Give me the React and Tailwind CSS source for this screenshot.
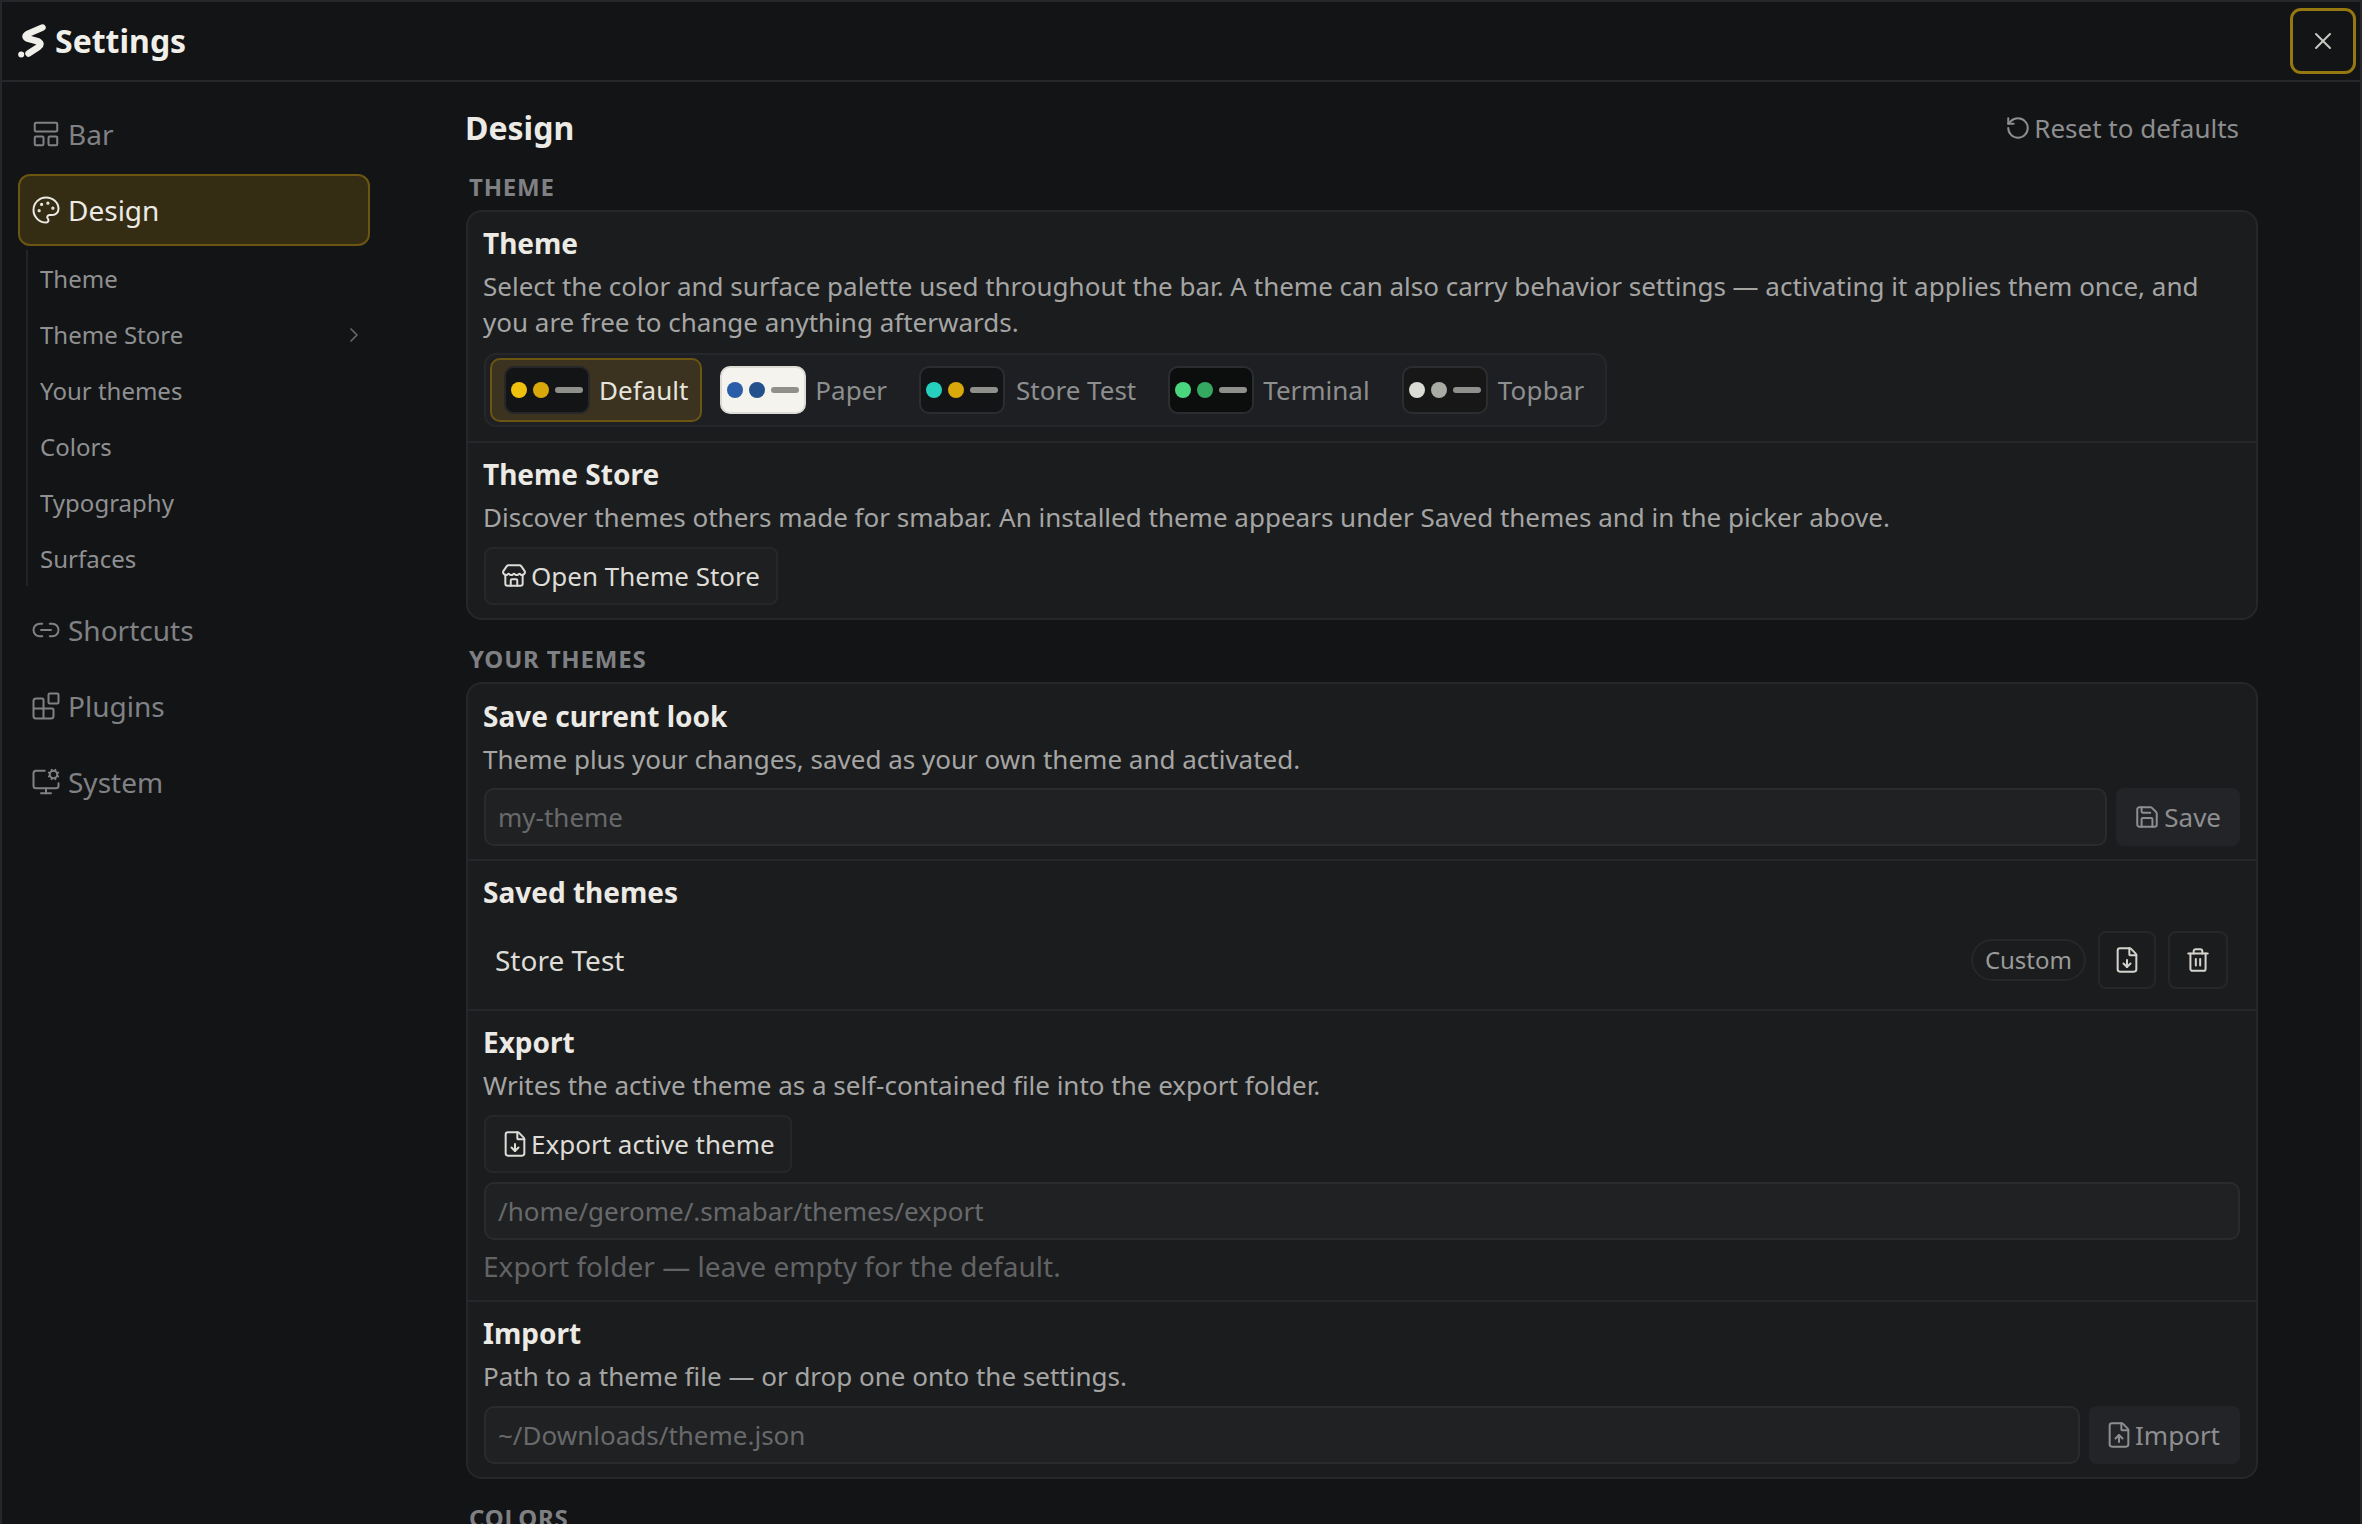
import { Blocks, ChevronRight, FileDown, FileUp, LayoutPanelTop, Link2, MonitorCog, Palette, RotateCcw, Save, Store, Trash2, X } from "lucide-react";

const Logo = () => (
  <svg viewBox="0 0 28 34" className="w-[28px] h-[34px] shrink-0" fill="none" stroke="#f1efea" strokeLinecap="round" strokeLinejoin="round">
    <path d="M24.5 3.5 L9.5 10 Q5.5 12.5 9.5 14.5 L20.5 17.5 Q24.5 20 20.5 23 L10.5 29.5" strokeWidth="6.5" />
    <circle cx="3.2" cy="30.5" r="3" fill="#f1efea" stroke="none" />
  </svg>
);

const NavItem = ({ icon: Icon, label, active }) => (
  <div className={`h-[72px] flex items-center pl-[11px] gap-[7px] rounded-[12px] border-2 text-[28px] ${active ? "bg-[#352c14] border-[#6b5511] text-[#eceae5]" : "border-transparent text-[#808184]"}`}>
    <Icon size={30} strokeWidth={1.6} className="shrink-0" />
    <span>{label}</span>
  </div>
);

const SubItem = ({ label, chevron }) => (
  <div className="h-[56px] pt-[2px] flex items-center justify-between pl-[12px] pr-[4px] text-[24px] text-[#8f9092]">
    <span>{label}</span>
    {chevron && <ChevronRight size={24} strokeWidth={1.7} className="text-[#66676a]" />}
  </div>
);

const Sidebar = () => (
  <aside className="w-[388px] shrink-0 pl-[16px] pr-[20px] pt-[16px] flex flex-col gap-[4px]">
    <NavItem icon={LayoutPanelTop} label="Bar" />
    <NavItem icon={Palette} label="Design" active />
    <div className="ml-[8px] mb-[4px] border-l-2 border-[#232427]">
      <SubItem label="Theme" />
      <SubItem label="Theme Store" chevron />
      <SubItem label="Your themes" />
      <SubItem label="Colors" />
      <SubItem label="Typography" />
      <SubItem label="Surfaces" />
    </div>
    <NavItem icon={Link2} label="Shortcuts" />
    <NavItem icon={Blocks} label="Plugins" />
    <NavItem icon={MonitorCog} label="System" />
  </aside>
);

const SectionLabel = ({ children, className }) => (
  <div className={`h-[36px] pl-[3px] flex items-center text-[24px] font-bold tracking-[0.8px] text-[#7f8083] ${className}`}>{children}</div>
);

const Row = ({ title, desc, children, className = "" }) => (
  <div className={`px-[16px] border-b-2 border-[#26272a] last:border-b-0 ${className}`}>
    <div className="-ml-[1px] h-[36px] flex items-center text-[28px] font-bold text-[#eceae5]">{title}</div>
    {desc && <p className="-ml-[1px] mt-[7px] text-[26px] leading-[36px] text-[#a5a5a4]">{desc}</p>}
    {children}
  </div>
);

const OutlineButton = ({ icon: Icon, size, className, children }) => (
  <button className={`h-[58px] pl-[15px] flex items-center rounded-[8px] border-2 border-[#26272a] bg-[#1e1f21] text-[26px] text-[#dedcd7] ${className}`}>
    <Icon size={size} strokeWidth={48 / size} />
    {children}
  </button>
);

const MutedButton = ({ icon: Icon, size, className, children }) => (
  <button className={`h-[58px] shrink-0 flex items-center rounded-[8px] bg-[#232427] text-[26px] text-[#8d8e8f] ${className}`}>
    <Icon size={size} strokeWidth={48 / size} />
    {children}
  </button>
);

const Field = ({ value, className = "" }) => (
  <div className={`h-[58px] px-[12px] flex items-center rounded-[10px] border-2 border-[#2a2b2e] bg-[#202123] text-[26px] text-[#68696b] ${className}`}>{value}</div>
);

const ThemeOption = ({ name, box, dots, active, labelClass = "" }) => (
  <div className={`h-[64px] px-[12px] flex items-center gap-[9px] rounded-[10px] border-2 ${active ? "bg-[#3b3220] border-[#6b5511] text-[#e6e4de]" : "border-transparent text-[#8d8e8f]"}`}>
    <div className={`w-[86px] h-[48px] pl-[5px] flex items-center gap-[6px] rounded-[10px] border-2 ${box}`}>
      <span className="w-[16px] h-[16px] rounded-full" style={{ background: dots[0] }} />
      <span className="w-[16px] h-[16px] rounded-full" style={{ background: dots[1] }} />
      <span className="w-[28px] h-[6px] rounded-full bg-[#8f8f8c]" />
    </div>
    <span className={`text-[26px] ${labelClass}`}>{name}</span>
  </div>
);

const SquareButton = ({ icon: Icon, size, className = "" }) => (
  <button className={`h-[58px] flex items-center justify-center rounded-[8px] border-2 border-[#26272a] text-[#d5d3ce] ${className}`}>
    <Icon size={size} strokeWidth={48 / size} />
  </button>
);

export default function App() {
  return (
    <div className="w-[2362px] h-[1524px] overflow-hidden flex flex-col bg-[#131416] border-2 border-b-0 border-[#26272a] font-['Noto_Sans',sans-serif]">
      <header className="h-[80px] shrink-0 pl-[16px] pr-[4px] flex items-center justify-between border-b-2 border-[#26272a]">
        <div className="flex items-center gap-[9px]">
          <Logo />
          <h1 className="text-[32px] font-bold text-[#f1efea]">Settings</h1>
        </div>
        <button className="w-[66px] h-[66px] flex items-center justify-center rounded-[11px] border-[3px] border-[#967810] text-[#c8c6c1]">
          <X size={28} strokeWidth={1.7} />
        </button>
      </header>

      <div className="flex-1 flex min-h-0">
        <Sidebar />
        <main className="flex-1 min-w-0 pl-[76px] pr-[102px] pt-[22px] overflow-hidden">
          <div className="h-[48px] flex items-center justify-between pr-[19px]">
            <h2 className="-ml-[1px] text-[32px] font-bold text-[#eceae5]">Design</h2>
            <button className="flex items-center gap-[3px] text-[26px] text-[#8d8e8f]">
              <RotateCcw size={26} strokeWidth={1.85} />
              Reset to defaults
            </button>
          </div>

          <SectionLabel className="mt-[17px] mb-[5px]">THEME</SectionLabel>
          <section className="rounded-[16px] border-2 border-[#26272a] bg-[#1b1c1e]">
            <Row className="pt-[13px] pb-[13px]" title="Theme" desc="Select the color and surface palette used throughout the bar. A theme can also carry behavior settings — activating it applies them once, and you are free to change anything afterwards.">
              <div className="mt-[13px] mb-[1px] w-fit h-[74px] pl-[4px] pr-[6px] flex items-center gap-[4px] rounded-[12px] border-2 border-[#26272a] bg-[#1e1f22]">
                <ThemeOption name="Default" box="bg-[#131416] border-[#26272a]" dots={["#f0c00f", "#d9a80a"]} active />
                <ThemeOption name="Paper" box="bg-[#f4f3ee] border-[#dcdbd6]" dots={["#2b5ea8", "#24508c"]} />
                <ThemeOption name="Store Test" box="bg-[#131416] border-[#2c2d30]" dots={["#25d0be", "#d9a80a"]} labelClass="ml-[2px]" />
                <ThemeOption name="Terminal" box="bg-[#0c0d0d] border-[#2c2d30]" dots={["#4ad67f", "#35a862"]} />
                <ThemeOption name="Topbar" box="bg-[#161716] border-[#2c2d30]" dots={["#dcdcd6", "#a8aaa4"]} labelClass="ml-[1px] tracking-[0.2px]" />
              </div>
            </Row>
            <Row className="pt-[13px] pb-[13px]" title="Theme Store" desc="Discover themes others made for smabar. An installed theme appears under Saved themes and in the picker above.">
              <div className="mt-[12px] flex">
                <OutlineButton icon={Store} size={26} className="gap-[4px] pr-[16px]">Open Theme Store</OutlineButton>
              </div>
            </Row>
          </section>

          <SectionLabel className="mt-[21px] mb-[5px]">YOUR THEMES</SectionLabel>
          <section className="rounded-[16px] border-2 border-[#26272a] bg-[#1b1c1e]">
            <Row className="pt-[14px] pb-[13px]" title="Save current look" desc="Theme plus your changes, saved as your own theme and activated.">
              <div className="mt-[11px] flex gap-[9px]">
                <Field value="my-theme" className="flex-1" />
                <MutedButton icon={Save} size={26} className="pl-[18px] pr-[19px] gap-[4px]">Save</MutedButton>
              </div>
            </Row>
            <Row className="pt-[13px] pb-[20px]" title="Saved themes">
              <div className="mt-[21px] pl-[11px] pr-[12px] flex items-center">
                <span className="flex-1 text-[28px] text-[#dedcd7]">Store Test</span>
                <span className="h-[42px] px-[12px] flex items-center rounded-full border-2 border-[#26272a] text-[24px] text-[#9a9a99]">Custom</span>
                <SquareButton icon={FileDown} size={28} className="ml-[12px] w-[58px]" />
                <SquareButton icon={Trash2} size={26} className="ml-[12px] w-[60px]" />
              </div>
            </Row>
            <Row className="pt-[13px] pb-[16px]" title="Export" desc="Writes the active theme as a self-contained file into the export folder.">
              <div className="mt-[12px] flex">
                <OutlineButton icon={FileDown} size={28} className="gap-[2px] pr-[15px]">Export active theme</OutlineButton>
              </div>
              <Field value="/home/gerome/.smabar/themes/export" className="mt-[9px]" />
              <p className="-ml-[1px] mt-[8px] h-[36px] text-[28px] leading-[36px] text-[#626365]">Export folder — leave empty for the default.</p>
            </Row>
            <Row className="pt-[13px] pb-[13px]" title="Import" desc="Path to a theme file — or drop one onto the settings.">
              <div className="mt-[12px] flex gap-[9px]">
                <Field value="~/Downloads/theme.json" className="flex-1" />
                <MutedButton icon={FileUp} size={28} className="pl-[16px] pr-[20px] gap-[2px]">Import</MutedButton>
              </div>
            </Row>
          </section>

          <SectionLabel className="mt-[21px]">COLORS</SectionLabel>
        </main>
      </div>
    </div>
  );
}
